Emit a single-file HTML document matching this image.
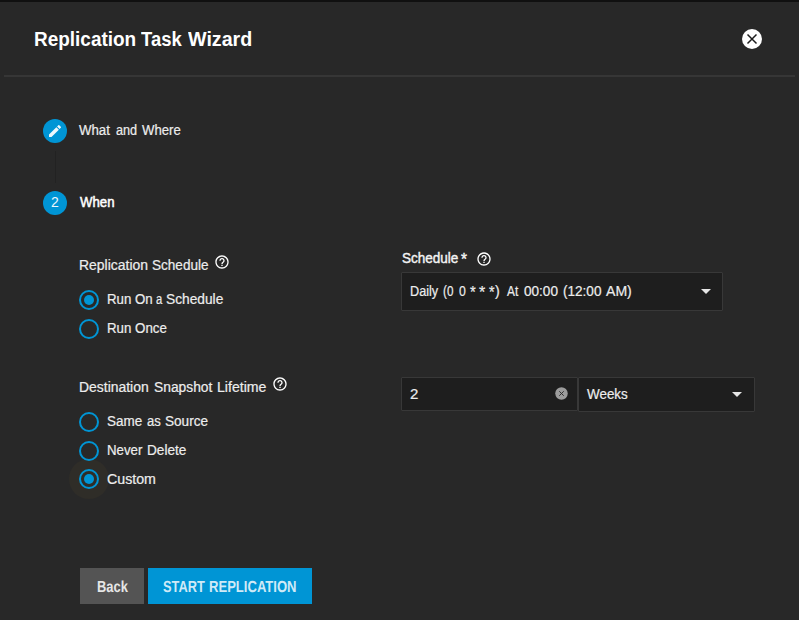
<!DOCTYPE html>
<html lang="en">
<head>
<meta charset="utf-8">
<title>Replication Task Wizard</title>
<style>
html,body{margin:0;padding:0;}
body{width:799px;height:620px;overflow:hidden;background:#282828;position:relative;font-family:"Liberation Sans",sans-serif;color:#fff;font-size:14px;}
.abs{position:absolute;white-space:nowrap;}
.t{-webkit-text-stroke:0.2px #ededed;color:#ededed;font-size:14px;line-height:20px;height:20px;width:799px;}
.w{position:absolute;top:0;display:block;transform-origin:0 50%;}
.topband{left:0;top:0;width:799px;height:2px;background:#101010;}
.divider{left:4px;top:75px;width:791px;height:2px;background:#363636;}
.step{width:24px;height:24px;border-radius:50%;background:#0095d5;left:43px;}
.vline{left:55px;top:151px;width:1px;height:32px;background:#222222;}
.radio{width:16px;height:16px;border:2px solid #0095d5;border-radius:50%;left:79px;}
.radio.on:after{content:"";position:absolute;left:3px;top:3px;width:10px;height:10px;border-radius:50%;background:#0095d5;}
.box{background:#1e1e1e;border:1px solid #383838;box-sizing:border-box;border-radius:1px;}
.btn{top:568px;height:36px;}
.arrow{width:0;height:0;border-left:5px solid transparent;border-right:5px solid transparent;border-top:5px solid #e6e6e6;}
</style>
</head>
<body>
<div class="abs topband"></div>
<svg class="abs" style="left:740px;top:27px;width:24px;height:24px" viewBox="0 0 24 24"><circle cx="12" cy="12" r="10" fill="#fff"/><path d="M7.5 7.5 L16.5 16.5 M16.5 7.5 L7.5 16.5" stroke="#1c1c1c" stroke-width="1.45" fill="none"/></svg>
<div class="abs divider"></div>

<div class="abs step" style="top:119px"></div>
<svg class="abs" style="left:47px;top:123px;width:16px;height:16px" viewBox="0 0 24 24"><path fill="#eef7fc" d="M3 17.25V21h3.75L17.81 9.94l-3.75-3.75L3 17.25zM20.71 7.04a.996.996 0 0 0 0-1.41l-2.34-2.34a.996.996 0 0 0-1.41 0l-1.83 1.83 3.75 3.75 1.83-1.83z"/></svg>
<div class="abs vline"></div>
<div class="abs step" style="top:191px;text-align:center;line-height:23px;font-size:14px;color:#eef7fc">2</div>

<div class="abs" style="left:69px;top:459px;width:40px;height:40px;border-radius:50%;background:#2f2d28"></div>
<div class="abs radio on" style="top:290px"></div><div class="abs radio" style="top:319px"></div>
<div class="abs radio" style="top:412px"></div><div class="abs radio" style="top:441px"></div>
<div class="abs radio on" style="top:469px"></div>
<svg class="abs" style="left:214px;top:254px;width:16px;height:16px" viewBox="0 0 24 24"><path fill="#fff" d="M11 18h2v-2h-2v2zm1-16C6.48 2 2 6.48 2 12s4.48 10 10 10 10-4.48 10-10S17.52 2 12 2zm0 18c-4.41 0-8-3.59-8-8s3.59-8 8-8 8 3.59 8 8-3.59 8-8 8zm0-14c-2.21 0-4 1.79-4 4h2c0-1.1.9-2 2-2s2 .9 2 2c0 2-3 1.75-3 5h2c0-2.25 3-2.5 3-5 0-2.21-1.79-4-4-4z"/></svg><svg class="abs" style="left:271.5px;top:376px;width:16px;height:16px" viewBox="0 0 24 24"><path fill="#fff" d="M11 18h2v-2h-2v2zm1-16C6.48 2 2 6.48 2 12s4.48 10 10 10 10-4.48 10-10S17.52 2 12 2zm0 18c-4.41 0-8-3.59-8-8s3.59-8 8-8 8 3.59 8 8-3.59 8-8 8zm0-14c-2.21 0-4 1.79-4 4h2c0-1.1.9-2 2-2s2 .9 2 2c0 2-3 1.75-3 5h2c0-2.25 3-2.5 3-5 0-2.21-1.79-4-4-4z"/></svg><svg class="abs" style="left:475.5px;top:251px;width:16px;height:16px" viewBox="0 0 24 24"><path fill="#fff" d="M11 18h2v-2h-2v2zm1-16C6.48 2 2 6.48 2 12s4.48 10 10 10 10-4.48 10-10S17.52 2 12 2zm0 18c-4.41 0-8-3.59-8-8s3.59-8 8-8 8 3.59 8 8-3.59 8-8 8zm0-14c-2.21 0-4 1.79-4 4h2c0-1.1.9-2 2-2s2 .9 2 2c0 2-3 1.75-3 5h2c0-2.25 3-2.5 3-5 0-2.21-1.79-4-4-4z"/></svg>

<div class="abs box" style="left:401px;top:272px;width:322px;height:39px"></div>
<div class="abs arrow" style="left:701px;top:289px"></div>
<div class="abs box" style="left:401px;top:377px;width:177px;height:34px"></div>
<svg class="abs" style="left:554.3px;top:386.2px;width:15px;height:15px" viewBox="0 0 24 24"><circle cx="12" cy="12" r="10" fill="#9c9c9c"/><path d="M8.4 8.4 L15.6 15.6 M15.6 8.4 L8.4 15.6" stroke="#2a2a2a" stroke-width="1.5" fill="none"/></svg>
<div class="abs box" style="left:578px;top:377px;width:177px;height:35px"></div>
<div class="abs arrow" style="left:732px;top:392px"></div>

<div class="abs btn" style="left:80px;width:64px;background:#545454"></div>
<div class="abs btn" style="left:148px;width:164px;background:#0095d5"></div>
<div class="abs t" id="title" style="left:0;top:27px;-webkit-text-stroke:0;color:#fff;font-size:20px;font-weight:bold;line-height:24px;"><span id="title_0" class="w" style="left:34.00px;transform:scale(0.9481,1);">Replication</span> <span id="title_1" class="w" style="left:141.00px;transform:scale(0.9221,1);">Task</span> <span id="title_2" class="w" style="left:188.00px;transform:scale(0.9833,1);">Wizard</span></div>
<div class="abs t" id="s1" style="left:0;top:120px;"><span id="s1_0" class="w" style="left:79.00px;transform:scale(0.9455,1);">What</span> <span id="s1_1" class="w" style="left:116.00px;transform:scale(0.9054,1);">and</span> <span id="s1_2" class="w" style="left:142.00px;transform:scale(0.9403,1);">Where</span></div>
<div class="abs t" id="s2" style="left:0;top:192px;color:#fff;-webkit-text-stroke:0.5px #fff;"><span id="s2_0" class="w" style="left:80.00px;transform:scale(0.9429,1);">When</span></div>
<div class="abs t" id="l1" style="left:0;top:255px;"><span id="l1_0" class="w" style="left:79.00px;transform:scale(0.9965,1);">Replication</span> <span id="l1_1" class="w" style="left:152.00px;transform:scale(0.9686,1);">Schedule</span></div>
<div class="abs t" id="r1" style="left:0;top:289px;"><span id="r1_0" class="w" style="left:107.00px;transform:scale(0.9497,1);">Run</span> <span id="r1_1" class="w" style="left:135.00px;transform:scale(0.9492,1);">On</span> <span id="r1_2" class="w" style="left:156.00px;transform:scale(0.8000,1);">a</span> <span id="r1_3" class="w" style="left:166.00px;transform:scale(0.9810,1);">Schedule</span></div>
<div class="abs t" id="r2" style="left:0;top:318px;"><span id="r2_0" class="w" style="left:107.00px;transform:scale(0.9497,1);">Run</span> <span id="r2_1" class="w" style="left:135.00px;transform:scale(0.9537,1);">Once</span></div>
<div class="abs t" id="l2" style="left:0;top:377px;"><span id="l2_0" class="w" style="left:79.00px;transform:scale(0.9947,1);">Destination</span> <span id="l2_1" class="w" style="left:154.00px;transform:scale(0.9859,1);">Snapshot</span> <span id="l2_2" class="w" style="left:217.00px;transform:scale(1.0084,1);">Lifetime</span></div>
<div class="abs t" id="r3" style="left:0;top:411px;"><span id="r3_0" class="w" style="left:107.00px;transform:scale(0.9601,1);">Same</span> <span id="r3_1" class="w" style="left:147.00px;transform:scale(0.9336,1);">as</span> <span id="r3_2" class="w" style="left:165.00px;transform:scale(0.9704,1);">Source</span></div>
<div class="abs t" id="r4" style="left:0;top:440px;"><span id="r4_0" class="w" style="left:107.00px;transform:scale(0.9468,1);">Never</span> <span id="r4_1" class="w" style="left:147.00px;transform:scale(0.9737,1);">Delete</span></div>
<div class="abs t" id="r5" style="left:0;top:469px;"><span id="r5_0" class="w" style="left:107.00px;transform:scale(1.0144,1);">Custom</span></div>
<div class="abs t" id="l3" style="left:0;top:248px;color:#f4f4f4;-webkit-text-stroke:0.4px #f4f4f4;"><span id="l3_0" class="w" style="left:402.00px;transform:scale(0.9657,1);">Schedule</span> <span id="l3_1" class="w" style="left:461.00px;transform:scale(0.9038,1);font-size:17px;top:2px;">*</span></div>
<div class="abs t" id="v1" style="left:0;top:281px;"><span id="v1_0" class="w" style="left:410.00px;transform:scale(0.9056,1);">Daily</span> <span id="v1_1" class="w" style="left:443.00px;transform:scale(0.8349,1);">(0</span> <span id="v1_2" class="w" style="left:459.00px;transform:scale(0.8764,1);">0</span> <span id="v1_3" class="w" style="left:470.00px;transform:scale(0.8649,1);font-size:17px;top:2px;">*</span> <span id="v1_4" class="w" style="left:479.00px;transform:scale(0.9426,1);font-size:17px;top:2px;">*</span> <span id="v1_5" class="w" style="left:489.00px;transform:scale(0.8406,1);font-size:17px;top:2px;">*</span> <span id="v1_6" class="w" style="left:495.00px;transform:scale(1.0236,1);">)</span> <span id="v1_7" class="w" style="left:507.00px;transform:scale(0.8468,1);">At</span> <span id="v1_8" class="w" style="left:524.00px;transform:scale(0.9698,1);">00:00</span> <span id="v1_9" class="w" style="left:563.00px;transform:scale(0.9678,1);">(12:00</span> <span id="v1_10" class="w" style="left:606.00px;transform:scale(1.0055,1);">AM)</span></div>
<div class="abs t" id="v2" style="left:0;top:384px;"><span id="v2_0" class="w" style="left:410.00px;transform:scale(1.0728,1);">2</span></div>
<div class="abs t" id="v3" style="left:0;top:384px;"><span id="v3_0" class="w" style="left:587.00px;transform:scale(0.9587,1);">Weeks</span></div>
<div class="abs t" id="b1" style="left:0;top:578px;-webkit-text-stroke:0;text-rendering:geometricPrecision;font-size:16px;font-weight:bold;color:#e6e6e6;"><span id="b1_0" class="w" style="left:97.00px;transform:scale(0.8067,1);">Back</span></div>
<div class="abs t" id="b2" style="left:0;top:578px;-webkit-text-stroke:0;text-rendering:geometricPrecision;font-size:16px;font-weight:bold;color:#cfeaf7;"><span id="b2_0" class="w" style="left:163.00px;transform:scale(0.8000,1);">START</span> <span id="b2_1" class="w" style="left:209.00px;transform:scale(0.8161,1);">REPLICATION</span></div>

</body>
</html>
